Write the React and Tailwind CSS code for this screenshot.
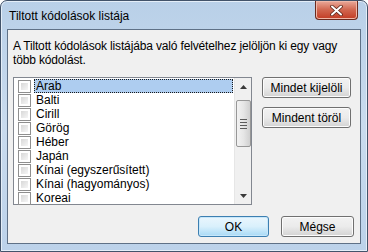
import React from "react";

const items = [
  "Arab",
  "Balti",
  "Cirill",
  "Görög",
  "Héber",
  "Japán",
  "Kínai (egyszerűsített)",
  "Kínai (hagyományos)",
  "Koreai",
];

function Checkbox() {
  return (
    <div className="w-[13px] h-[13px] border border-[#8f8f8f] bg-white p-[2px] shrink-0">
      <div className="w-full h-full bg-gradient-to-br from-[#d8d8d8] to-[#f6f6f6]" />
    </div>
  );
}

function Btn({ children, def = false, className = "" }) {
  return (
    <div
      className={
        "flex items-center justify-center rounded-[3px] border text-[12px] leading-[12px] text-black " +
        (def
          ? "border-[#3c7fb1] bg-gradient-to-b from-[#eaf6fd] via-[#d9f0fc] to-[#a7d9f5] shadow-[inset_0_0_0_1px_#c7e7fa] "
          : "border-[#707070] bg-gradient-to-b from-[#f2f2f2] via-[#ebebeb] to-[#d3d3d3] shadow-[inset_0_0_0_1px_#fcfcfc] ") +
        className
      }
    >
      {children}
    </div>
  );
}

export default function App() {
  return (
    <div
      className="w-[368px] h-[252px] flex flex-col rounded-t-[7px] border border-[#42536a] bg-gradient-to-b from-[#b9d0e8] via-[#c9dbee] to-[#bcd2ea] shadow-[inset_0_0_0_1px_#e4eef8] overflow-hidden"
      style={{ fontFamily: '"Liberation Sans", Arial, sans-serif' }}
    >
      <div className="h-[28px] flex justify-between shrink-0">
        <div className="pl-[8px] pt-[8px] text-[12px] leading-[14px] text-black">Tiltott kódolások listája</div>
        <div className="mr-[9px] w-[43px] h-[19px] rounded-b-[4px] border border-t-0 border-[#6b2a1e] bg-gradient-to-b from-[#e9a99a] via-[#d0654e] to-[#c23a22] flex items-center justify-center shadow-[inset_0_0_0_1px_#f0b8a8]">
          <svg width="13" height="11" viewBox="0 0 13 11">
            <path d="M2 1.5 L11 9.5 M11 1.5 L2 9.5" stroke="#5a2418" strokeWidth="3.6" strokeLinecap="round" />
            <path d="M2 1.5 L11 9.5 M11 1.5 L2 9.5" stroke="#ffffff" strokeWidth="2" strokeLinecap="round" />
          </svg>
        </div>
      </div>
      <div className="flex-1 mx-[6px] mb-[7px] border border-[#5f7187] bg-[#f0f0f0] flex flex-col pl-[5px] pr-[6px] pt-[9px] pb-[6px] text-[12px] text-black">
        <div className="leading-[14px] tracking-[-0.15px]">
          A Tiltott kódolások listájába való felvételhez jelöljön ki egy vagy több kódolást.
        </div>
        <div className="flex mt-[10px] gap-[10px]">
          <div className="w-[239px] h-[128px] border border-[#828790] bg-white flex">
            <div className="flex-1 flex flex-col pt-[1px] pl-[4px] pr-[1px]">
              {items.map((it, i) => (
                <div key={it} className="h-[14px] flex items-center gap-[3px]">
                  <Checkbox />
                  <div
                    className={
                      "flex-1 h-[14px] leading-[12px] pl-[1px] " +
                      (i === 0 ? "bg-[#aecdf0] border border-dotted border-[#1a1a1a]" : "border border-transparent")
                    }
                  >
                    {it}
                  </div>
                </div>
              ))}
            </div>
            <div className="w-[17px] bg-[#f0f0f0] border-l border-[#e6e6e6] flex flex-col items-center">
              <div className="h-[17px] flex items-center justify-center">
                <svg width="7" height="4" viewBox="0 0 7 4"><path d="M0 4 L3.5 0 L7 4 Z" fill="#3a3a3a" /></svg>
              </div>
              <div className="mt-[5px] w-[15px] h-[47px] rounded-[2px] border border-[#979797] bg-gradient-to-r from-[#f2f2f2] via-[#e6e6e6] to-[#d0d0d0] flex flex-col items-center justify-center gap-[2px]">
                <div className="w-[7px] h-[1px] bg-[#5c5c5c]" />
                <div className="w-[7px] h-[1px] bg-[#5c5c5c]" />
                <div className="w-[7px] h-[1px] bg-[#5c5c5c]" />
                <div className="w-[7px] h-[1px] bg-[#5c5c5c]" />
              </div>
              <div className="flex-1" />
              <div className="h-[17px] flex items-center justify-center">
                <svg width="7" height="4" viewBox="0 0 7 4"><path d="M0 0 L3.5 4 L7 0 Z" fill="#3a3a3a" /></svg>
              </div>
            </div>
          </div>
          <div className="flex flex-col gap-[9px]">
            <Btn className="w-[89px] h-[21px]">Mindet kijelöli</Btn>
            <Btn className="w-[89px] h-[21px]">Mindent töröl</Btn>
          </div>
        </div>
        <div className="flex-1" />
        <div className="flex justify-end gap-[12px]">
          <Btn def className="w-[71px] h-[21px]">OK</Btn>
          <Btn className="w-[73px] h-[21px]">Mégse</Btn>
        </div>
      </div>
    </div>
  );
}
